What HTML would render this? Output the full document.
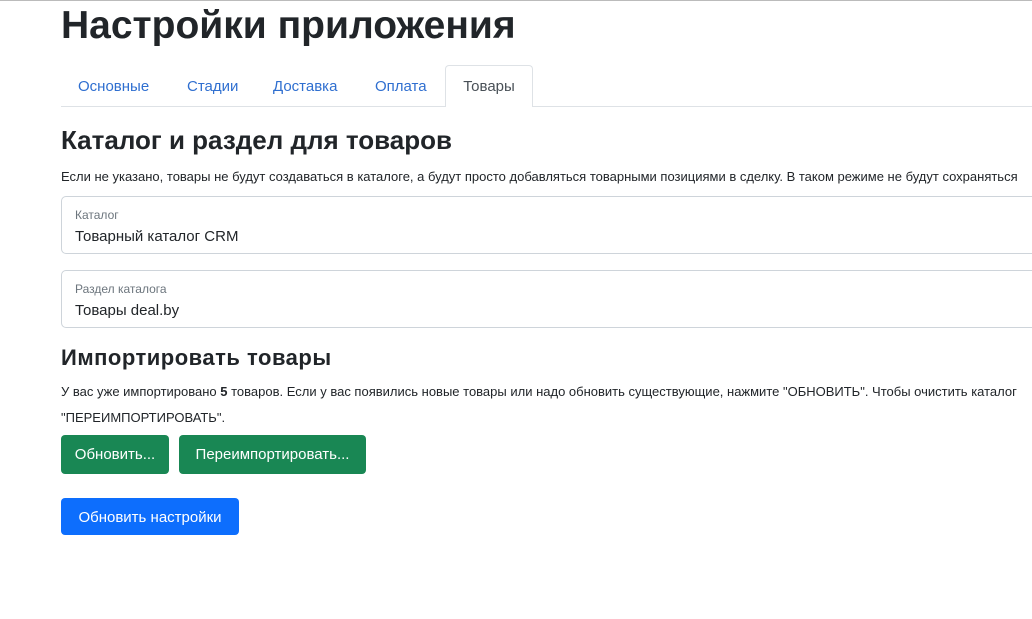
<!DOCTYPE html>
<html><head><meta charset="utf-8"><style>
body{margin:0;width:1032px;height:619px;overflow:hidden;background:#fff;font-family:"Liberation Sans",sans-serif;color:#212529;position:relative}
.a{position:absolute;white-space:nowrap}
.top{position:absolute;left:0;top:0;width:1032px;height:1px;background:#bbb}
h1{position:absolute;left:61px;top:4px;margin:0;font-size:39px;font-weight:600;letter-spacing:0;white-space:nowrap}
.tabs{position:absolute;left:61px;top:106px;width:980px;border-top:1px solid #dee2e6}
.tab{position:absolute;top:78px;font-size:15px;color:#2f6fd0}
.act{position:absolute;left:445px;top:65px;width:86px;height:41px;border:1px solid #dee2e6;border-bottom:none;border-radius:4px 4px 0 0;background:#fff;font-size:15px;color:#495057;text-align:center;line-height:42px}
h3{position:absolute;left:61px;top:125px;margin:0;font-size:26px;font-weight:600;letter-spacing:0;white-space:nowrap}
.p{font-size:13px}
.in{position:absolute;left:61px;width:990px;height:56px;border:1px solid #ced4da;border-radius:5px}
.in .l{position:absolute;left:13px;top:11px;font-size:12px;color:#6c757d}
.in .v{position:absolute;left:13px;top:31px;font-size:15px}
h4{position:absolute;left:61px;top:345px;margin:0;font-size:22px;font-weight:600;letter-spacing:0.5px;white-space:nowrap}
.btn{position:absolute;color:#fff;font-size:15px;border-radius:4px;text-align:center}
.g{background:#198754;top:435px;height:39px;line-height:39px}
</style></head><body>
<div class="top"></div>
<h1>Настройки приложения</h1>
<div class="tabs"></div>
<div class="a tab" style="left:78px">Основные</div>
<div class="a tab" style="left:187px">Стадии</div>
<div class="a tab" style="left:273px">Доставка</div>
<div class="a tab" style="left:375px">Оплата</div>
<div class="act">Товары</div>
<h3>Каталог и раздел для товаров</h3>
<div class="a p" style="left:61px;top:169px">Если не указано, товары не будут создаваться в каталоге, а будут просто добавляться товарными позициями в сделку. В таком режиме не будут сохраняться</div>
<div class="in" style="top:196px"><div class="a l">Каталог</div><div class="a v">Товарный каталог CRM</div></div>
<div class="in" style="top:270px"><div class="a l">Раздел каталога</div><div class="a v">Товары deal.by</div></div>
<h4>Импортировать товары</h4>
<div class="a p" style="left:61px;top:384px">У вас уже импортировано <b>5</b> товаров. Если у вас появились новые товары или надо обновить существующие, нажмите "ОБНОВИТЬ". Чтобы очистить каталог</div>
<div class="a p" style="left:61px;top:410px">"ПЕРЕИМПОРТИРОВАТЬ".</div>
<div class="btn g" style="left:61px;width:108px">Обновить...</div>
<div class="btn g" style="left:179px;width:187px">Переимпортировать...</div>
<div class="btn" style="left:61px;top:498px;width:178px;height:37px;line-height:39px;background:#0d6efd">Обновить настройки</div>
</body></html>
